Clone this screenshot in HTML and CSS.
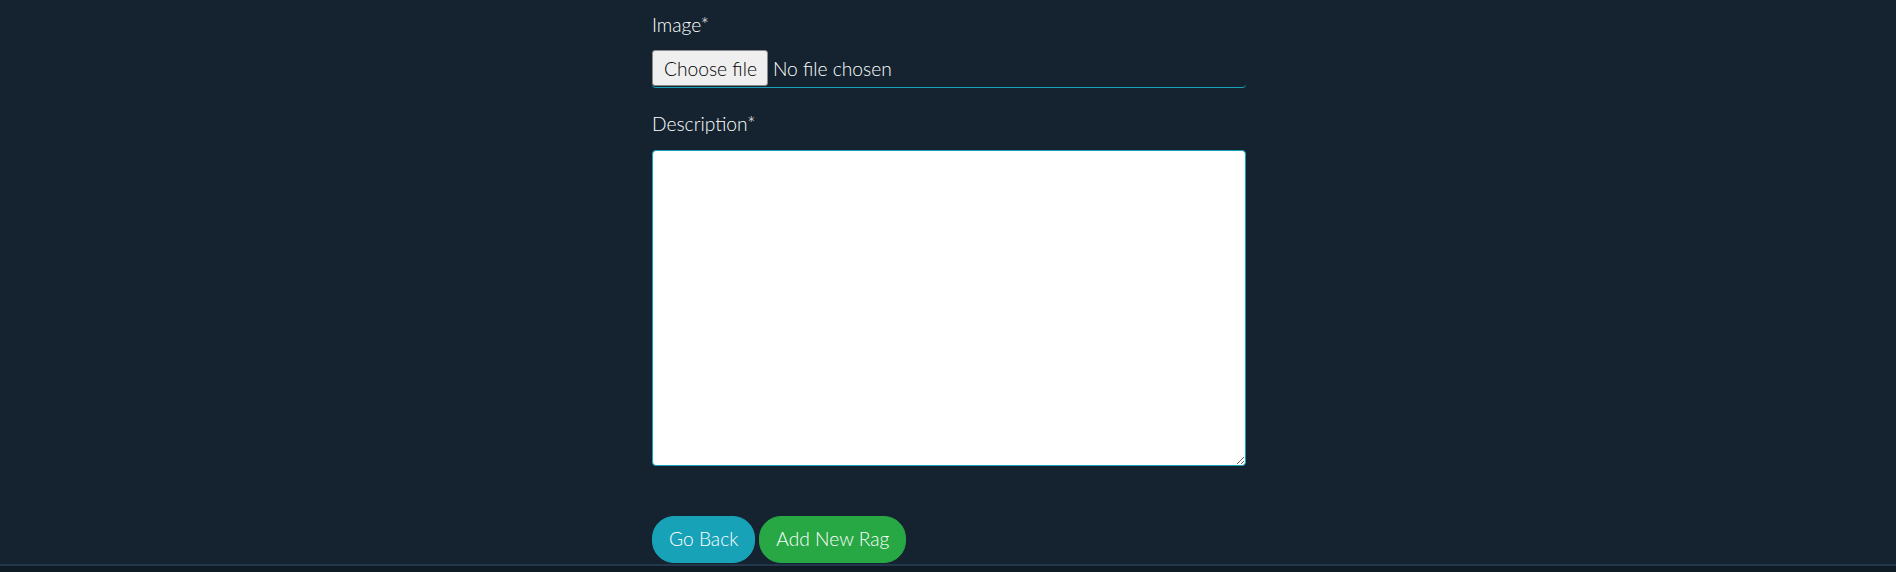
FILE: index.html
```html
<!DOCTYPE html>
<html lang="en">
<head>
<meta charset="utf-8">
<title>Add New Rag</title>
<link rel="stylesheet" href="styles.css">
</head>
<body>
<main class="page">
  <form class="rag-form">
    <div class="form-group group-image">
      <label class="form-label">Image*</label>
      <div class="file-field">
        <span class="file-button">Choose file</span>
        <span class="file-status">No file chosen</span>
      </div>
    </div>
    <div class="form-group group-desc">
      <label class="form-label" for="description">Description*</label>
      <textarea id="description" class="desc-input"></textarea>
    </div>
    <div class="actions">
      <a class="btn btn-back" href="#">Go Back</a>
      <button type="button" class="btn btn-add">Add New Rag</button>
    </div>
  </form>
</main>
<footer class="site-footer"></footer>
</body>
</html>
```

FILE: styles.css
```css
html, body {
  margin: 0;
  padding: 0;
}

body {
  background: #14232f;
  color: #ffffff;
  font-family: Lato, "Noto Sans", sans-serif;
  font-weight: 300;
  font-size: 19.2px;
  line-height: 1.5;
}

.page {
  display: flex;
  justify-content: center;
  padding-top: 11px;
}

.rag-form {
  width: 594px;
  margin-left: 2px;
  display: flex;
  flex-direction: column;
}

.form-group {
  display: flex;
  flex-direction: column;
}

.group-image {
  margin-bottom: 22px;
}

.form-label {
  display: block;
  font-size: 19.2px;
  font-weight: 300;
  line-height: 28.8px;
  color: #ffffff;
  margin-bottom: 10.5px;
}

.file-field {
  display: flex;
  align-items: flex-start;
  height: 37px;
  border-bottom: 1px solid #17a2b8;
  border-radius: 0 0 4px 4px;
}

.file-button {
  box-sizing: border-box;
  height: 36px;
  padding: 0 10px 0 11px;
  display: flex;
  align-items: center;
  background: #efefef;
  color: #000;
  border: 1px solid #8a8a8a;
  border-radius: 3px;
  font-size: 19.2px;
  font-weight: 300;
  line-height: 1;
}

.file-status {
  height: 36px;
  display: flex;
  align-items: center;
  margin-left: 5px;
  font-size: 19.2px;
  font-weight: 300;
  line-height: 1;
  color: #ffffff;
}

.desc-input {
  box-sizing: border-box;
  width: 594px;
  height: 316px;
  margin: 0;
  background: #ffffff;
  border: 1px solid #17a2b8;
  border-radius: 4px;
  font-family: Lato, "Noto Sans", sans-serif;
  font-size: 19.2px;
}

.actions {
  display: flex;
  gap: 4px;
  margin-top: 50px;
  margin-bottom: 1px;
}

.btn {
  box-sizing: border-box;
  height: 47px;
  padding: 8px 16px;
  border: 1px solid transparent;
  border-radius: 22px;
  font-family: Lato, "Noto Sans", sans-serif;
  font-weight: 300;
  font-size: 19.2px;
  line-height: 28.8px;
  color: #ffffff;
  text-decoration: none;
  display: inline-block;
  cursor: pointer;
}

.btn-back {
  background: #17a2b8;
  border-color: #17a2b8;
}

.btn-add {
  background: #28a745;
  border-color: #28a745;
}

.site-footer {
  border-top: 2px solid #22384a;
  background: #0f1c26;
  height: 40px;
}
```
